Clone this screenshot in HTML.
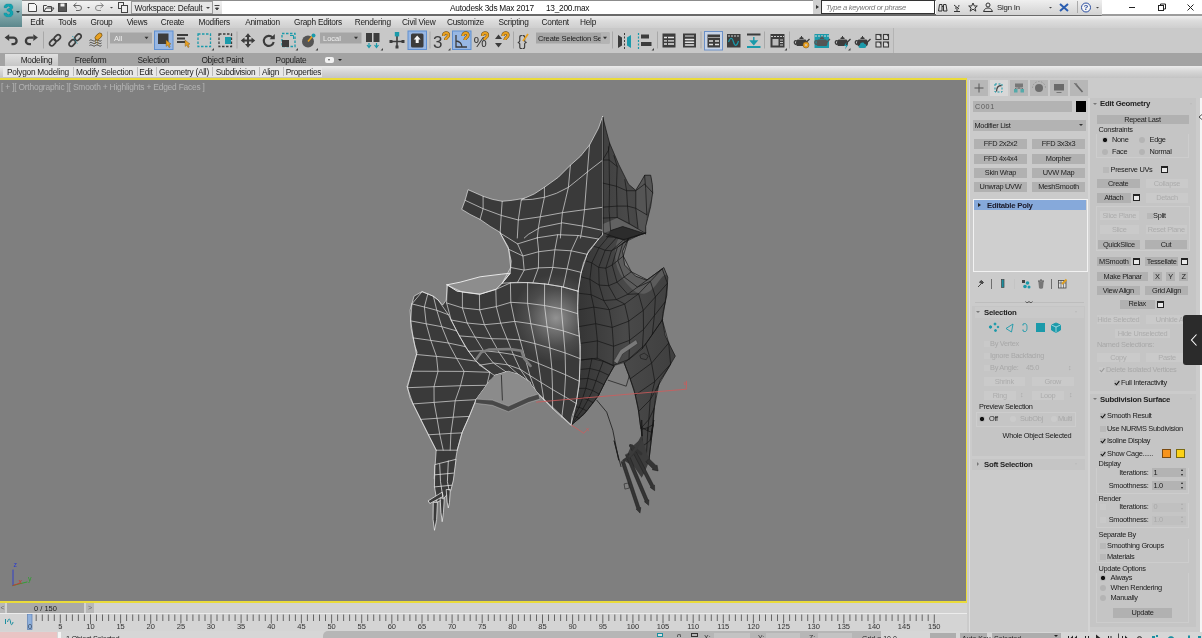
<!DOCTYPE html><html><head><meta charset="utf-8"><title>Autodesk 3ds Max 2017 13_200.max</title><style>
*{box-sizing:border-box;margin:0;padding:0}
html,body{width:1202px;height:638px;overflow:hidden;background:#cbcbcb}
body{position:relative;will-change:transform;font-family:"Liberation Sans",sans-serif;font-size:8.5px;color:#1a1a1a;line-height:1}
.a{position:absolute}
.t{position:absolute;white-space:nowrap;line-height:10px;height:10px}
.c{text-align:center}
.btn{position:absolute;background:#b1b1b1;text-align:center;white-space:nowrap;line-height:10px;height:10px;font-size:7.4px;letter-spacing:-0.3px;color:#222}
.btn.d{background:#cacaca;color:#acacac}
.dis{color:#a8a8a8}
.cb{position:absolute;width:6px;height:6px;background:#b9b9b9}
.rd{position:absolute;width:6px;height:6px;border-radius:50%;background:#b4b4b4}
.rd.on{background:radial-gradient(circle,#111 0 1.8px,#b4b4b4 2.4px)}
.p{font-size:7.4px;letter-spacing:-0.3px}
</style></head><body>
<div class="a" style="left:0;top:0;width:1202px;height:15px;background:#fff"></div>
<div class="a" style="left:0;top:0;width:222px;height:15px;background:linear-gradient(#f4f4f4,#dadada)"></div>
<div class="a" style="left:22px;top:0;width:1080px;height:1px;background:#808080;opacity:.9"></div>
<div class="a" style="left:0;top:14.200px;width:1202px;height:1.400px;background:linear-gradient(90deg,#6a6a6a 0,#6a6a6a 91.600%,#9c9c9c 91.700%)"></div>
<div class="a" style="left:0;top:0;width:22px;height:27px;background:linear-gradient(#b8cecf,#86acb0 45%,#5f8b90);border-radius:0"></div>
<div class="t" style="left:3.500px;top:0.500px;font-size:18px;line-height:20px;height:20px;font-weight:bold;color:#12a3b0;text-shadow:0 0 1px #0c7f8a">3</div>
<div class="a" style="left:16px;top:11px;border:2px solid transparent;border-top:2.5px solid #1c3c42"></div>
<svg class="a" style="left:24px;top:0" width="200" height="15" viewBox="0 0 200 15" fill="none" stroke="#444" stroke-width="1">
<path d="M4.5 3.5h6l2 2v6h-8z" fill="#f4f4f4"/>
<path d="M19.5 5.5h3l1 1h4v5h-8z" fill="#eee"/><path d="M20 11.5l2-3.5h8l-2.5 3.500"/>
<rect x="34.500" y="3.500" width="8" height="8" fill="#555"/><rect x="36.500" y="3.500" width="4" height="3" fill="#eee" stroke="none"/>
<path d="M50 5.500h5a2.500 2.500 0 010 5h-3M52.500 3l-3 2.500 3 2.500" stroke="#666"/>
<path d="M63 7l1.500 1.500 1.500-1.500z" fill="#444" stroke="none"/>
<path d="M79 5.500h-5a2.500 2.500 0 000 5h3M76.500 3l3 2.500-3 2.500" stroke="#888"/>
<path d="M86 7l1.500 1.500 1.500-1.500z" fill="#444" stroke="none"/>
<rect x="94.500" y="2.500" width="5" height="6" fill="#eee"/><rect x="97.500" y="5.500" width="6" height="7" fill="#eee"/>
<path d="M190.500 5.500h5M191.500 8l1.500 2 1.500-2z" fill="#333"/>
</svg>
<div class="a" style="left:131px;top:1px;width:82px;height:13px;background:#e6e6e6;border:1px solid #9a9a9a"></div>
<div class="t" style="left:134.5px;top:2.5px;font-size:8.3px;letter-spacing:-0.25px;color:#222">Workspace: Default</div>
<div class="a" style="left:206px;top:6.500px;border:2px solid transparent;border-top:2.5px solid #444"></div>
<div class="t" style="left:450px;top:2.500px;font-size:8.3px;letter-spacing:-0.25px;color:#111">Autodesk 3ds Max 2017</div>
<div class="t" style="left:546px;top:2.500px;font-size:8.3px;letter-spacing:-0.25px;color:#111">13_200.max</div>
<div class="a" style="left:936px;top:0;width:166px;height:14.500px;background:linear-gradient(#efefef,#d2d2d2)"></div>
<div class="a" style="left:813px;top:0;width:8px;height:14px;background:#d0d0d0"></div>
<div class="a" style="left:816px;top:4.500px;border:2.5px solid transparent;border-left:3px solid #333"></div>
<div class="a" style="left:821px;top:0;width:114px;height:14px;background:#fff;border:1px solid #333"></div>
<div class="t" style="left:826px;top:2.500px;font-size:7.6px;letter-spacing:-0.3px;font-style:italic;color:#777">Type a keyword or phrase</div>
<svg class="a" style="left:936px;top:0" width="170" height="15" viewBox="0 0 170 15" fill="none" stroke="#333" stroke-width="1">
<path d="M3.500 4.500h2.500v6.500h-3.500zM7.500 4.500h2.500l1 6.500h-3.500zM6 6.500h1.500" />
<path d="M18 5l5 4M19 8a3 3 0 004-3M21 9v2M18 11.500h6"/>
<path d="M37 3l1.300 3h3l-2.400 2 1 3.200-2.900-2-2.900 2 1-3.200-2.400-2h3z"/>
<circle cx="52" cy="5" r="2"/><path d="M47.500 11.500c1-3 3-3.500 4.500-3.500s3.500 .5 4.500 3.500z"/>
<path d="M113 7l1.500 1.500 1.500-1.500z" fill="#444" stroke="none"/>
<path d="M124 4l8 7M132 4l-8 7" stroke="#2a5db0" stroke-width="2"/>
<path d="M141.500 1v12" stroke="#aaa"/>
<circle cx="150" cy="7.500" r="4.500" stroke="#2a4da0" fill="#f4f4f4"/>
<path d="M160 7l1.500 1.500 1.500-1.500z" fill="#444" stroke="none"/>
</svg>
<div class="t" style="left:997px;top:2.500px;font-size:7.8px;letter-spacing:-0.2px;color:#222">Sign In</div>
<div class="t" style="left:1083.500px;top:2.500px;font-size:8px;font-weight:bold;color:#2a4da0">?</div>
<svg class="a" style="left:1110px;top:0" width="92" height="15" viewBox="0 0 92 15" fill="none" stroke="#222" stroke-width="1">
<path d="M19 7.500h6"/><rect x="48.500" y="5.500" width="5" height="5"/><path d="M50.500 5.500v-1.500h5v5h-2"/><path d="M77.500 4.500l6 6M83.500 4.500l-6 6"/></svg>
<div class="a" style="left:0;top:15.600px;width:1202px;height:12.400px;background:linear-gradient(#f0f0f0,#dcdcdc 40%,#cfcfcf)"></div>
<div class="t c" style="left:21px;width:32px;top:16.500px;font-size:8.3px;letter-spacing:-0.25px;color:#222">Edit</div>
<div class="t c" style="left:48.5px;width:37.5px;top:16.500px;font-size:8.3px;letter-spacing:-0.25px;color:#222">Tools</div>
<div class="t c" style="left:81px;width:41px;top:16.500px;font-size:8.3px;letter-spacing:-0.25px;color:#222">Group</div>
<div class="t c" style="left:117px;width:40px;top:16.500px;font-size:8.3px;letter-spacing:-0.25px;color:#222">Views</div>
<div class="t c" style="left:152px;width:41px;top:16.500px;font-size:8.3px;letter-spacing:-0.25px;color:#222">Create</div>
<div class="t c" style="left:188.5px;width:51.5px;top:16.500px;font-size:8.3px;letter-spacing:-0.25px;color:#222">Modifiers</div>
<div class="t c" style="left:235px;width:55px;top:16.500px;font-size:8.3px;letter-spacing:-0.25px;color:#222">Animation</div>
<div class="t c" style="left:285px;width:66px;top:16.500px;font-size:8.3px;letter-spacing:-0.25px;color:#222">Graph Editors</div>
<div class="t c" style="left:345.5px;width:54.5px;top:16.500px;font-size:8.3px;letter-spacing:-0.25px;color:#222">Rendering</div>
<div class="t c" style="left:392px;width:53.5px;top:16.500px;font-size:8.3px;letter-spacing:-0.25px;color:#222">Civil View</div>
<div class="t c" style="left:437.5px;width:56.0px;top:16.500px;font-size:8.3px;letter-spacing:-0.25px;color:#222">Customize</div>
<div class="t c" style="left:488.5px;width:50.0px;top:16.500px;font-size:8.3px;letter-spacing:-0.25px;color:#222">Scripting</div>
<div class="t c" style="left:531px;width:48.5px;top:16.500px;font-size:8.3px;letter-spacing:-0.25px;color:#222">Content</div>
<div class="t c" style="left:570px;width:36px;top:16.500px;font-size:8.3px;letter-spacing:-0.25px;color:#222">Help</div>
<div class="a" style="left:0;top:15px;width:22px;height:12px;background:linear-gradient(#7ea5a9,#5c878c);border-radius:0"></div>
<div class="t" style="left:3.500px;top:0.500px;font-size:18px;line-height:20px;height:20px;font-weight:bold;color:#12a3b0;text-shadow:0 0 1px #0c7f8a">3</div>
<div class="a" style="left:0;top:28px;width:1202px;height:25px;background:#cacaca"></div>
<div class="a" style="left:0;top:28px;width:894px;height:25px;background:#c8c8c8;border-right:1px solid #b4b4b4"></div>
<svg class="a" style="left:0;top:28px" width="894" height="25" viewBox="0 0 894 25" fill="none" font-family="Liberation Sans, sans-serif">
<path d="M9 9.600h4.300a3.300 3.300 0 010 6.600h-1.800" stroke="#3c3c3c" stroke-width="2.300"/><path d="M4.600 9.600l4.600-3.300v6.600z" fill="#3c3c3c"/>
<path d="M33.500 9.600h-4.300a3.300 3.300 0 000 6.600h1.800" stroke="#3c3c3c" stroke-width="2.300"/><path d="M37.900 9.600l-4.600-3.300v6.600z" fill="#3c3c3c"/>
<path d="M43.5 3.500v17" stroke="#a8a8a8" stroke-width="1"/>
<g stroke="#3c3c3c" stroke-width="1.700"><rect x="-3.600" y="-2.300" width="7.200" height="4.600" rx="2.300" transform="translate(52.700 14.500) rotate(-45)"/><rect x="-3.600" y="-2.300" width="7.200" height="4.600" rx="2.300" transform="translate(57.300 9.900) rotate(-45)"/></g>
<g stroke="#3c3c3c" stroke-width="1.700"><rect x="-3.600" y="-2.300" width="7.200" height="4.600" rx="2.300" transform="translate(72.200 15) rotate(-45)"/><rect x="-3.600" y="-2.300" width="7.200" height="4.600" rx="2.300" transform="translate(78 9.200) rotate(-45)"/></g><path d="M72.500 8l5 8" stroke="#1b9aaa" stroke-width="0.900" stroke-dasharray="1.500 1"/>
<path d="M89.500 12.500c2-2 4 2 6 0s4 2 6 0M89.500 15c2-2 4 2 6 0s4 2 6 0M89.500 17.500c2-2 4 2 6 0s4 2 6 0" stroke="#3c3c3c" stroke-width="0.900"/><ellipse cx="98.500" cy="8.500" rx="4.200" ry="2.400" transform="rotate(-45 98.500 8.500)" fill="#e8a020" stroke="#6a4a10" stroke-width="0.700"/><path d="M96 11c-1 2 0 3-1 5M97.500 12c0 2 1 3 0 5" stroke="#8a6a20" stroke-width="0.700"/>
<path d="M107.5 3.500v17" stroke="#a8a8a8" stroke-width="1"/>
<rect x="110" y="4.500" width="42" height="11" fill="#a6a6a6"/><text x="114" y="12.800" font-size="7.500" fill="#eee">All</text><path d="M144.500 9.500l2 2.500 2-2.500z" fill="#333" transform="translate(0 -0.700)"/>
<rect x="154.500" y="3" width="18.500" height="18.500" fill="#98b7e3" stroke="#5f8fd0" stroke-width="1"/>
<rect x="158" y="5.500" width="10.500" height="10.500" fill="#3c3c3c"/><path d="M166 12l5 4-2 .5 1.200 2.500-1.200 .6-1.200-2.500-1.600 1.300z" fill="#e8a020" stroke="#7a5010" stroke-width=".4"/>
<path d="M177 7h11M177 10.500h8M177 14h8" stroke="#3c3c3c" stroke-width="1.800"/><path d="M185 12l5 4-2 .5 1.200 2.500-1.200 .6-1.200-2.500-1.600 1.300z" fill="#e8a020" stroke="#7a5010" stroke-width=".4"/>
<rect x="198" y="6" width="12.500" height="12.500" stroke="#1b9aaa" stroke-width="1.300" stroke-dasharray="2.500 1.500"/>
<path d="M214 22.500h-2.500l2.500-2.500z" fill="#444"/>
<rect x="219" y="6" width="12.500" height="12.500" stroke="#3c3c3c" stroke-width="1.300" stroke-dasharray="2.500 1.500"/><rect x="225" y="9" width="6" height="7" fill="#1b9aaa"/>
<path d="M237 3.500v17" stroke="#a8a8a8" stroke-width="1"/>
<path d="M248 8v9M243.500 12.500h9" stroke="#3c3c3c" stroke-width="2"/><path d="M248 5.300l3 3.700h-6zM248 19.700l3-3.700h-6zM240.800 12.500l3.700-3v6zM255.200 12.500l-3.700-3v6z" fill="#3c3c3c"/>
<path d="M272.500 9.500a5 5 0 10 1.200 4.500" stroke="#3c3c3c" stroke-width="2.100"/><path d="M274.800 6v5.200h-5.200z" fill="#3c3c3c"/>
<rect x="282" y="5.500" width="13" height="13" stroke="#1b9aaa" stroke-width="1.300" stroke-dasharray="2.500 1.500"/><rect x="282" y="12" width="7" height="7" fill="#3c3c3c"/><path d="M290 7.500h3.500v3.500" stroke="#1b9aaa" stroke-width="1"/>
<path d="M298 22.500h-2.500l2.500-2.500z" fill="#444"/>
<circle cx="308" cy="13.500" r="6" fill="#555"/><path d="M308 13.500l5-6" stroke="#e8a020" stroke-width="1.500"/><circle cx="313.500" cy="7.500" r="2" fill="#1b9aaa"/>
<path d="M318 22.500h-2.500l2.500-2.500z" fill="#444"/>
<rect x="320" y="4.500" width="41.500" height="11" fill="#a6a6a6"/><text x="323" y="12.800" font-size="7.500" fill="#eee">Local</text><path d="M354 9.500l2 2.500 2-2.500z" fill="#333" transform="translate(0 -0.700)"/>
<rect x="366" y="5" width="6" height="9" fill="#3c3c3c"/><rect x="373.500" y="5" width="6" height="9" fill="#3c3c3c"/><path d="M369 15v4M376.500 15v4M367 17l2 2.500 2-2.500M374.500 17l2 2.500 2-2.500" stroke="#1b9aaa" stroke-width="1.200"/>
<path d="M383 22.500h-2.500l2.500-2.500z" fill="#444"/>
<path d="M397 7v12M390.500 13.500h13" stroke="#3c3c3c" stroke-width="1.600"/><rect x="394.800" y="4" width="4.400" height="4.400" fill="#1b9aaa"/><rect x="389.500" y="12" width="3" height="3" fill="#3c3c3c"/><rect x="401.500" y="12" width="3" height="3" fill="#3c3c3c"/><rect x="395.500" y="17.500" width="3" height="3" fill="#3c3c3c"/>
<rect x="408" y="3" width="18.500" height="18.500" fill="#98b7e3" stroke="#5f8fd0" stroke-width="1"/>
<rect x="411" y="5.500" width="12.500" height="14" rx="1.500" fill="#3c3c3c"/><path d="M417.200 7.500l3.500 4h-2v3.500h-3v-3.500h-2z" fill="#f4f4f4"/>
<path d="M430 3.500v17" stroke="#a8a8a8" stroke-width="1"/>
<text x="433" y="19.500" font-size="17" fill="#3c3c3c">3</text><path d="M443.500 8c0-4 5-4 5-1s-3 2-3 5" stroke="#6a4a10" stroke-width="3.200"/><path d="M443.500 8c0-4 5-4 5-1s-3 2-3 5" stroke="#e8a020" stroke-width="2.200"/>
<path d="M450.5 22.500h-2.500l2.500-2.500z" fill="#444"/>
<rect x="452.500" y="3" width="18.500" height="18.500" fill="#98b7e3" stroke="#5f8fd0" stroke-width="1"/>
<path d="M456 7v12h11M456 13a6 6 0 016 6" stroke="#3c3c3c" stroke-width="1.300"/><path d="M463 8c0-4 5-4 5-1s-3 2-3 5" stroke="#6a4a10" stroke-width="3.200"/><path d="M463 8c0-4 5-4 5-1s-3 2-3 5" stroke="#e8a020" stroke-width="2.200"/>
<text x="473.500" y="19" font-size="15" fill="#3c3c3c">%</text><path d="M482.500 8c0-4 5-4 5-1s-3 2-3 5" stroke="#6a4a10" stroke-width="3.200"/><path d="M482.500 8c0-4 5-4 5-1s-3 2-3 5" stroke="#e8a020" stroke-width="2.200"/>
<path d="M498.500 6.500l3.500 4.500h-7zM498.500 19.500l3.500-4.500h-7z" fill="#3c3c3c"/><path d="M503 8c0-4 5-4 5-1s-3 2-3 5" stroke="#6a4a10" stroke-width="3.200"/><path d="M503 8c0-4 5-4 5-1s-3 2-3 5" stroke="#e8a020" stroke-width="2.200"/>
<path d="M513.5 3.500v17" stroke="#a8a8a8" stroke-width="1"/>
<text x="517.500" y="18" font-size="14" fill="#3c3c3c">{}</text><path d="M523 13l5-7" stroke="#e8a020" stroke-width="1.800"/>
<rect x="536" y="4.500" width="73.500" height="11" fill="#a6a6a6"/><clipPath id="cs"><rect x="536" y="5" width="64.500" height="12"/></clipPath><text x="538" y="12.800" font-size="7.500" letter-spacing="-0.150" fill="#222" clip-path="url(#cs)">Create Selection Set</text><rect x="601" y="4.500" width="8.500" height="11" fill="#b4b4b4"/><path d="M603 9.500l2 2.500 2-2.500z" fill="#333" transform="translate(0 -0.700)"/>
<path d="M612.5 3.500v17" stroke="#a8a8a8" stroke-width="1"/>
<path d="M618 7l4 2.500v8l-4 2.500z" fill="#3c3c3c"/><path d="M631 7l-4 2.500v8l4 2.500z" fill="#1b9aaa"/><path d="M624.500 5v16" stroke="#3c3c3c" stroke-width="1" stroke-dasharray="2 1.500"/>
<path d="M638.500 5v16" stroke="#1b9aaa" stroke-width="1.200" stroke-dasharray="2 1.500"/><rect x="641" y="6.500" width="8" height="4" fill="#3c3c3c"/><rect x="641" y="14" width="10.500" height="4" fill="#3c3c3c"/>
<path d="M654 22.500h-2.500l2.500-2.500z" fill="#444"/>
<path d="M657.5 3.500v17" stroke="#a8a8a8" stroke-width="1"/>
<rect x="662.500" y="5.500" width="13" height="14" fill="#3c3c3c"/><path d="M664 9.500h10M664 12.800h10M664 16h10" stroke="#e4e4e4" stroke-width="1.300"/><path d="M667.500 8.500v9" stroke="#3c3c3c" stroke-width="1"/>
<rect x="683" y="5.500" width="13" height="14" fill="#3c3c3c"/><path d="M685 8h9" stroke="#e4e4e4" stroke-width="1"/><path d="M685.500 11.500h8M685.500 14.300h8M685.500 17h8" stroke="#e4e4e4" stroke-width="1.500" stroke-linecap="round"/>
<path d="M701 3.500v17" stroke="#a8a8a8" stroke-width="1"/>
<rect x="704.500" y="3.500" width="18" height="18.500" fill="#c8d4e6" stroke="#6a90c8" stroke-width="1"/>
<rect x="707.500" y="6.500" width="12.500" height="13" fill="#3c3c3c"/><path d="M709 13h4M715 13h4M709 16.500h4M715 16.500h4" stroke="#ddd" stroke-width="1.500"/><path d="M708 9.500h12" stroke="#ddd" stroke-width=".6"/>
<rect x="727" y="6" width="13.500" height="13.500" fill="#3c3c3c"/><path d="M728.500 14c2-5 3.500-5 5 0s3.500 4 5-1" stroke="#1b9aaa" stroke-width="1.200"/><path d="M728 8h12" stroke="#ccc" stroke-width="1" stroke-dasharray="2 1"/>
<path d="M747 6.500h13.500" stroke="#3c3c3c" stroke-width="2"/><path d="M747 19h13.500" stroke="#1b9aaa" stroke-width="2"/><path d="M753.800 9v5M750.800 13l3 3.500 3-3.500z" stroke="#1b9aaa" fill="#1b9aaa" stroke-width="1.400"/>
<path d="M764.5 3.500v17" stroke="#a8a8a8" stroke-width="1"/>
<rect x="770.500" y="6" width="14" height="13.500" fill="#3c3c3c"/><path d="M771 8.500h13" stroke="#ccc" stroke-width="1" stroke-dasharray="2 1"/><rect x="772.500" y="11" width="6" height="6.500" fill="#bbb"/><path d="M780 12h3M780 14.500h3M780 17h3" stroke="#ccc" stroke-width="1"/>
<path d="M787 22.500h-2.500l2.500-2.500z" fill="#444"/>
<path d="M789.5 3.500v17" stroke="#a8a8a8" stroke-width="1"/>
<path d="M797.5 11.500h8c2 2 2 4.500 .5 6.500h-9c-1.500-2-1.500-4.500 .5-6.500zM800 9.300h3l.8 1.800h-4.600zM801 8h1v1.200h-1z" fill="#3c3c3c"/><path d="M806 14.500l3.500-3.500M797 13c-3.500-1.500-3.500 3.500-.5 3.500" stroke="#3c3c3c" stroke-width="1.300" fill="none"/>
<circle cx="806" cy="17" r="3" fill="#e8a020" stroke="#8a5a10" stroke-width=".6"/><circle cx="806" cy="17" r="1" fill="#c8c8c8"/>
<rect x="814.500" y="6" width="14.500" height="14" fill="#1b9aaa"/><path d="M815 8h14" stroke="#ddd" stroke-width="1" stroke-dasharray="2 1"/>
<path d="M818.0 11.500h8c2 2 2 4.500 .5 6.500h-9c-1.500-2-1.500-4.500 .5-6.500zM820.5 9.300h3l.8 1.800h-4.600zM821.5 8h1v1.200h-1z" fill="#555"/><path d="M826.5 14.500l3.500-3.500M817.5 13c-3.500-1.500-3.500 3.500-.5 3.500" stroke="#555" stroke-width="1.300" fill="none"/>
<path d="M838.5 11.500h8c2 2 2 4.500 .5 6.500h-9c-1.500-2-1.500-4.500 .5-6.500zM841 9.300h3l.8 1.800h-4.600zM842 8h1v1.200h-1z" fill="#3c3c3c"/><path d="M847 14.500l3.500-3.500M838 13c-3.500-1.500-3.500 3.500-.5 3.500" stroke="#3c3c3c" stroke-width="1.300" fill="none"/>
<path d="M846.500 14l-2.500 4h2l-1 3.500 3-4.500h-2z" fill="#1b9aaa"/>
<path d="M850.5 22.500h-2.500l2.500-2.500z" fill="#444"/>
<path d="M858.5 11.500h8c2 2 2 4.500 .5 6.500h-9c-1.500-2-1.500-4.500 .5-6.500zM861 9.300h3l.8 1.800h-4.600zM862 8h1v1.200h-1z" fill="#3c3c3c"/><path d="M867 14.500l3.500-3.500M858 13c-3.500-1.500-3.500 3.500-.5 3.500" stroke="#3c3c3c" stroke-width="1.300" fill="none"/>
<path d="M860 20c-2 0-2-3 0-3c0-3 4-3 4.500-1c2.500-.5 2.500 4 0 4z" fill="#1b9aaa"/>
<g stroke="#3c3c3c" stroke-width="1.100" fill="#d8d8d8"><rect x="876" y="6.500" width="5" height="5"/><rect x="883.500" y="6.500" width="5" height="5"/><rect x="876" y="14" width="5" height="5"/><rect x="883.500" y="14" width="5" height="5"/></g><path d="M879 6.500h2v3M886.500 6.500h2v3M879 14h2v3M886.500 14h2v3" fill="#3c3c3c"/>
</svg>
<div class="a" style="left:0;top:53px;width:1202px;height:13px;background:#a3a3a3"></div>
<div class="a" style="left:5px;top:54px;width:53px;height:12px;background:linear-gradient(#e0e0e0,#c6c6c6)"></div>
<div class="t c" style="left:10.5px;width:52.0px;top:54.500px;font-size:8.3px;letter-spacing:-0.25px;color:#222">Modeling</div>
<div class="t c" style="left:66px;width:49px;top:54.500px;font-size:8.3px;letter-spacing:-0.25px;color:#222">Freeform</div>
<div class="t c" style="left:128px;width:51px;top:54.500px;font-size:8.3px;letter-spacing:-0.25px;color:#222">Selection</div>
<div class="t c" style="left:192px;width:61px;top:54.500px;font-size:8.3px;letter-spacing:-0.25px;color:#222">Object Paint</div>
<div class="t c" style="left:266px;width:50px;top:54.500px;font-size:8.3px;letter-spacing:-0.25px;color:#222">Populate</div>
<div class="a" style="left:325px;top:56.500px;width:9px;height:6px;background:#f2f2f2;border-radius:2px"></div>
<div class="a" style="left:328px;top:58.500px;border:1.5px solid transparent;border-top:2px solid #555"></div>
<div class="a" style="left:338px;top:58.500px;border:2px solid transparent;border-top:2.5px solid #222"></div>
<div class="a" style="left:0;top:66px;width:1202px;height:12px;background:linear-gradient(#ececec 0,#d6d6d6 45%,#c4c4c4 100%)"></div>
<div class="a" style="left:3px;top:66px;width:319px;height:11px;background:#e8e8e8"></div>
<div class="t c" style="left:-3px;width:82px;top:66.500px;font-size:8.3px;letter-spacing:-0.25px;color:#222">Polygon Modeling</div>
<div class="t c" style="left:66px;width:77px;top:66.500px;font-size:8.3px;letter-spacing:-0.25px;color:#222">Modify Selection</div>
<div class="t c" style="left:130px;width:32px;top:66.500px;font-size:8.3px;letter-spacing:-0.25px;color:#222">Edit</div>
<div class="t c" style="left:150px;width:68px;top:66.500px;font-size:8.3px;letter-spacing:-0.25px;color:#222">Geometry (All)</div>
<div class="t c" style="left:206px;width:59px;top:66.500px;font-size:8.3px;letter-spacing:-0.25px;color:#222">Subdivision</div>
<div class="t c" style="left:252px;width:37px;top:66.500px;font-size:8.3px;letter-spacing:-0.25px;color:#222">Align</div>
<div class="t c" style="left:277px;width:53px;top:66.500px;font-size:8.3px;letter-spacing:-0.25px;color:#222">Properties</div>
<div class="a" style="left:72.5px;top:67px;width:1px;height:9px;background:#bbb"></div>
<div class="a" style="left:136.5px;top:67px;width:1px;height:9px;background:#bbb"></div>
<div class="a" style="left:156px;top:67px;width:1px;height:9px;background:#bbb"></div>
<div class="a" style="left:212px;top:67px;width:1px;height:9px;background:#bbb"></div>
<div class="a" style="left:258.5px;top:67px;width:1px;height:9px;background:#bbb"></div>
<div class="a" style="left:283px;top:67px;width:1px;height:9px;background:#bbb"></div>
<div class="a" style="left:0;top:77.500px;width:967.500px;height:525px;background:#7f7f7f;border:2.500px solid #eadb3a;border-left:0"></div>
<div class="t" style="left:1px;top:81.500px;font-size:8.4px;color:#b4b4b4;letter-spacing:-0.2px">[ + ][ Orthographic ][ Smooth + Highlights + Edged Faces ]</div>
<svg class="a" style="left:0;top:80px" width="965" height="521" viewBox="0 80 965 521" fill="none" stroke-linejoin="round" stroke-linecap="round">
<defs>
<radialGradient id="hl" gradientUnits="userSpaceOnUse" cx="556" cy="318" r="44"><stop offset="0" stop-color="#929292"/><stop offset=".3" stop-color="#707070"/><stop offset=".65" stop-color="#4c4c4c"/><stop offset="1" stop-color="#3a3a3a"/></radialGradient>
<linearGradient id="lg1" gradientUnits="userSpaceOnUse" x1="470" y1="200" x2="600" y2="200"><stop offset="0" stop-color="#3e3e3e"/><stop offset="1" stop-color="#4e4e4e"/></linearGradient>
<linearGradient id="rg1" gradientUnits="userSpaceOnUse" x1="580" y1="0" x2="670" y2="0"><stop offset="0" stop-color="#363636"/><stop offset=".5" stop-color="#494949"/><stop offset="1" stop-color="#404040"/></linearGradient>
</defs>
<path d="M602.6 116.4L598.5 128.1L589.5 145.1L580.5 156.2L570.4 165.2L558.4 177.2L544.4 187.3L534.3 193.9L524.3 198.3L512.2 200.3L502.2 201.3L492.2 199.3L483.1 196.3L468.1 189.7L465.1 200.3L461.7 209.3L470.1 214.4L480.1 219.4L490.2 226.4L500.2 232.4L500.2 233.0L508.2 247.1L511.2 261.1L510.2 273.2L502.2 283.2L496.2 289.2L480.1 294.2L457.1 291.2L447.0 284.8L446.2 300.1L442.6 305.1L438.2 300.1L433.1 296.1L422.1 291.7L414.1 296.1L410.1 310.1L411.1 328.2L415.1 346.3L417.1 352.3L412.1 370.3L407.1 386.4L407.1 386.0L410.1 398.1L418.1 414.1L427.1 432.2L436.2 450.2L435.2 464.3L434.2 478.3L452.2 480.3L454.2 468.3L457.2 450.2L462.2 432.2L470.3 414.1L476.3 399.1L490.3 380.0L494.4 375.4L508.4 371.3L518.4 374.4L530.5 382.4L530.5 384.0L538.5 394.0L571.6 425.2L571.0 425.3L572.0 416.2L576.0 404.2L579.0 386.2L579.6 374.1L580.1 360.1L580.5 345.4L578.5 329.4L577.9 317.3L577.5 305.3L578.1 291.2L580.5 275.2L583.5 263.1L588.5 251.1L598.5 239.0L602.5 235.0L602.5 116.4Z" fill="#3a3a3a"/>
<clipPath id="cl"><path d="M602.6 116.4L598.5 128.1L589.5 145.1L580.5 156.2L570.4 165.2L558.4 177.2L544.4 187.3L534.3 193.9L524.3 198.3L512.2 200.3L502.2 201.3L492.2 199.3L483.1 196.3L468.1 189.7L465.1 200.3L461.7 209.3L470.1 214.4L480.1 219.4L490.2 226.4L500.2 232.4L500.2 233.0L508.2 247.1L511.2 261.1L510.2 273.2L502.2 283.2L496.2 289.2L480.1 294.2L457.1 291.2L447.0 284.8L446.2 300.1L442.6 305.1L438.2 300.1L433.1 296.1L422.1 291.7L414.1 296.1L410.1 310.1L411.1 328.2L415.1 346.3L417.1 352.3L412.1 370.3L407.1 386.4L407.1 386.0L410.1 398.1L418.1 414.1L427.1 432.2L436.2 450.2L435.2 464.3L434.2 478.3L452.2 480.3L454.2 468.3L457.2 450.2L462.2 432.2L470.3 414.1L476.3 399.1L490.3 380.0L494.4 375.4L508.4 371.3L518.4 374.4L530.5 382.4L530.5 384.0L538.5 394.0L571.6 425.2L571.0 425.3L572.0 416.2L576.0 404.2L579.0 386.2L579.6 374.1L580.1 360.1L580.5 345.4L578.5 329.4L577.9 317.3L577.5 305.3L578.1 291.2L580.5 275.2L583.5 263.1L588.5 251.1L598.5 239.0L602.5 235.0L602.5 116.4Z"/></clipPath>
<g clip-path="url(#cl)"><circle cx="556" cy="318" r="44" fill="url(#hl)"/></g>
<path d="M447.0 284.8L460.1 282.2L480.1 276.8L501.2 274.2L510.2 273.2L502.2 283.2L496.2 289.2L480.1 294.2L457.1 291.2L447.0 284.8Z" fill="#8d8d8d" stroke="#f0f0f0" stroke-width="0.9"/>
<path d="M602.6 116.4L606.6 132.1L609.6 143.1L618.6 164.2L628.6 184.3L635.7 190.3L640.7 182.2L644.7 175.2L650.7 175.2L652.3 184.3L652.7 192.3L650.7 206.3L647.7 218.4L645.7 226.4L645.7 233.0L628.6 238.0L622.6 251.1L624.6 265.1L635.7 276.2L646.7 280.2L657.7 272.2L663.8 267.5L667.8 277.2L666.8 295.2L662.8 313.3L662.3 320.0L665.3 336.0L675.3 356.1L668.3 368.1L660.3 380.2L656.2 392.2L654.2 408.2L653.2 424.3L650.2 440.3L653.8 420.0L651.2 440.7L648.6 463.1L643.4 463.1L641.7 440.7L641.7 420.0L642.2 436.3L640.2 424.3L638.2 408.2L634.2 390.2L629.2 376.1L624.2 363.1L614.1 366.1L606.1 380.2L598.1 396.2L584.1 414.2L571.0 425.3L571.0 425.3L572.0 416.2L576.0 404.2L579.0 386.2L579.6 374.1L580.1 360.1L580.5 345.4L578.5 329.4L577.9 317.3L577.5 305.3L578.1 291.2L580.5 275.2L583.5 263.1L588.5 251.1L598.5 239.0L602.5 235.0Z" fill="url(#rg1)"/>
<clipPath id="cr"><path d="M602.6 116.4L606.6 132.1L609.6 143.1L618.6 164.2L628.6 184.3L635.7 190.3L640.7 182.2L644.7 175.2L650.7 175.2L652.3 184.3L652.7 192.3L650.7 206.3L647.7 218.4L645.7 226.4L645.7 233.0L628.6 238.0L622.6 251.1L624.6 265.1L635.7 276.2L646.7 280.2L657.7 272.2L663.8 267.5L667.8 277.2L666.8 295.2L662.8 313.3L662.3 320.0L665.3 336.0L675.3 356.1L668.3 368.1L660.3 380.2L656.2 392.2L654.2 408.2L653.2 424.3L650.2 440.3L653.8 420.0L651.2 440.7L648.6 463.1L643.4 463.1L641.7 440.7L641.7 420.0L642.2 436.3L640.2 424.3L638.2 408.2L634.2 390.2L629.2 376.1L624.2 363.1L614.1 366.1L606.1 380.2L598.1 396.2L584.1 414.2L571.0 425.3L571.0 425.3L572.0 416.2L576.0 404.2L579.0 386.2L579.6 374.1L580.1 360.1L580.5 345.4L578.5 329.4L577.9 317.3L577.5 305.3L578.1 291.2L580.5 275.2L583.5 263.1L588.5 251.1L598.5 239.0L602.5 235.0Z"/></clipPath>
<g clip-path="url(#cr)"><path d="M645.7 234.2L642.1 235.2L638.6 236.2L635.0 237.2L631.5 238.2L628.2 239.5L625.6 241.5L624.0 244.4L623.1 247.9L622.6 251.5L622.6 255.1L622.9 258.8L623.6 262.4L624.6 265.9L626.1 269.2L627.9 272.4L629.9 275.6L632.1 278.5L634.6 281.2L637.3 283.7L640.0 285.7L642.7 286.3L645.4 285.1L647.9 282.7L650.4 279.9L652.6 277.0L654.8 274.0L657.2 271.3L660.1 269.2L663.2 267.5" stroke="#5c5c5c" stroke-width="15" fill="none"/>
<path d="M602.9 224.1L617.2 217.9L645.7 233.5L622.7 226.5L610.6 230.6L602.9 233.5Z" fill="#626262"/>
<path d="M610.6 230.6L622.7 226.5L645.7 233.9L624.8 240.3L613.9 237.2L606.2 236.8Z" fill="#2c2c2c"/>
<path d="M635.8 190.7L644.6 175.4L651.2 175.8L652.9 192.9L646.8 214.8L645.7 233.5L638.0 228.0L635.8 208.3Z" fill="#555"/>
</g>
<path d="M608.4 146.8L609.1 160.0L609.5 188.5L609.1 210.5L610.6 230.2M613.9 155.6L617.2 166.6L616.5 186.3L617.2 217.5M624.8 179.7L626.6 190.7L627.5 206.1L629.2 223.6M635.8 190.7L635.8 208.3L638.0 228.0M602.5 183.0L616.5 186.3L626.6 190.7L635.8 190.7L644.6 184.1M602.5 207.2L617.2 206.1L627.5 206.1L635.8 208.3L646.8 214.8M602.5 218.1L617.2 217.5L629.2 223.6L645.7 233.5M602.5 160.0L609.1 160.0L617.2 166.6M644.6 175.4L645.7 188.5L646.8 214.8M644.6 184.1L652.9 192.9M610.6 230.6L622.7 226.5L645.7 233.9M606.2 236.8L613.9 237.2L624.8 240.3M602.6 160.2L608.6 150.1L609.6 143.1M602.6 116.4L606.6 132.1L609.6 143.1L618.6 164.2L628.6 184.3L635.7 190.3L640.7 182.2L644.7 175.2L650.7 175.2L652.3 184.3L652.7 192.3L650.7 206.3L647.7 218.4L645.7 226.4L645.7 233.0L628.6 238.0L622.6 251.1L624.6 265.1L635.7 276.2L646.7 280.2L657.7 272.2L663.8 267.5L667.8 277.2L666.8 295.2L662.8 313.3L662.3 320.0L665.3 336.0L675.3 356.1L668.3 368.1L660.3 380.2L656.2 392.2L654.2 408.2L653.2 424.3L650.2 440.3L653.8 420.0L651.2 440.7L648.6 463.1M624.2 363.1L629.2 376.1L634.2 390.2L638.2 408.2L640.2 424.3L642.2 436.3L641.7 420.0L641.7 440.7L643.4 463.1M614.1 366.1L606.1 380.2L598.1 396.2L584.1 414.2L571.0 425.3M602.5 232.4L609.5 235.2L616.6 237.6L623.9 239.5L631.1 237.7L638.4 235.4L645.7 233.0M592.9 246.1L599.0 247.8L605.1 250.3L611.4 250.8L617.3 247.4L622.8 243.1L628.3 238.8M584.6 260.5L591.8 262.9L598.7 267.4L605.8 268.2L612.2 265.0L617.8 260.5L623.3 256.1M580.3 276.6L589.9 279.3L599.2 285.1L608.6 285.7L617.0 282.2L624.1 277.0L631.3 271.8M578.0 293.2L591.1 294.7L603.7 300.5L616.4 299.6L627.8 294.3L637.5 287.1L647.2 279.8M577.6 310.0L593.8 307.1L609.2 309.7L624.7 304.0L638.6 293.8L650.4 281.3L662.2 268.8M578.3 326.7L595.7 323.7L612.2 327.4L628.7 321.2L643.3 310.4L655.4 296.9L667.4 283.3M580.2 343.4L597.4 340.9L613.5 346.3L629.6 340.3L643.5 329.5L654.4 315.6L665.3 301.7M580.1 360.1L597.2 358.2L613.1 365.3L629.0 359.4L642.4 348.6L652.3 334.3L662.3 320.0M602.5 232.4L592.9 246.1L584.6 260.5L580.3 276.6L578.0 293.2L577.6 310.0L578.3 326.7L580.2 343.4L580.1 360.1M609.5 235.2L599.0 247.8L591.8 262.9L589.9 279.3L591.1 294.7L593.8 307.1L595.7 323.7L597.4 340.9L597.2 358.2M616.6 237.6L605.1 250.3L598.7 267.4L599.2 285.1L603.7 300.5L609.2 309.7L612.2 327.4L613.5 346.3L613.1 365.3M623.9 239.5L611.4 250.8L605.8 268.2L608.6 285.7L616.4 299.6L624.7 304.0L628.7 321.2L629.6 340.3L629.0 359.4M631.1 237.7L617.3 247.4L612.2 265.0L617.0 282.2L627.8 294.3L638.6 293.8L643.3 310.4L643.5 329.5L642.4 348.6M638.4 235.4L622.8 243.1L617.8 260.5L624.1 277.0L637.5 287.1L650.4 281.3L655.4 296.9L654.4 315.6L652.3 334.3M645.7 233.0L628.3 238.8L623.3 256.1L631.3 271.8L647.2 279.8L662.2 268.8L667.4 283.3L665.3 301.7L662.3 320.0M624.2 363.1L645.7 344.1L662.3 320.0M630.2 378.9L651.6 363.1L668.7 343.0M635.3 395.0L654.8 381.5L670.6 364.2M638.6 411.5L650.2 399.8L658.7 384.9M640.9 428.3L648.8 419.6L654.2 408.4M641.9 427.5L647.8 430.9L651.7 432.3M641.7 429.4L648.0 427.6L653.0 424.6M642.2 446.3L647.1 443.0L651.4 439.2M643.4 463.1L646.0 463.1L648.6 463.1M624.2 363.1L630.2 378.9L635.3 395.0L638.6 411.5L640.9 428.3L641.9 427.5L641.7 429.4L642.2 446.3L643.4 463.1M645.7 344.1L651.6 363.1L654.8 381.5L650.2 399.8L648.8 419.6L647.8 430.9L648.0 427.6L647.1 443.0L646.0 463.1M662.3 320.0L668.7 343.0L670.6 364.2L658.7 384.9L654.2 408.4L651.7 432.3L653.0 424.6L651.4 439.2L648.6 463.1M580.1 360.1L591.9 358.6L603.2 361.3L614.1 366.1M579.8 369.5L589.9 368.5L599.5 370.9L608.9 375.3M579.4 379.0L587.9 378.4L596.0 380.7L603.9 384.6M578.7 388.4L585.8 388.3L592.6 390.5L599.2 394.1M577.1 397.7L582.7 397.9L587.9 399.8L593.1 402.7M575.1 406.9L579.1 407.3L582.9 408.8L586.6 411.0M572.1 415.9L574.5 416.2L576.8 417.2L579.1 418.4M571.0 425.3L571.0 425.3L571.0 425.3L571.0 425.3M580.1 360.1L579.8 369.5L579.4 379.0L578.7 388.4L577.1 397.7L575.1 406.9L572.1 415.9L571.0 425.3M591.9 358.6L589.9 368.5L587.9 378.4L585.8 388.3L582.7 397.9L579.1 407.3L574.5 416.2L571.0 425.3M603.2 361.3L599.5 370.9L596.0 380.7L592.6 390.5L587.9 399.8L582.9 408.8L576.8 417.2L571.0 425.3M614.1 366.1L608.9 375.3L603.9 384.6L599.2 394.1L593.1 402.7L586.6 411.0L579.1 418.4L571.0 425.3" stroke="#161616" stroke-width="0.7"/>
<path d="M602.6 160.2L589.5 170.2L578.5 179.2L568.4 187.3L556.4 193.3L544.4 197.3L532.3 199.3L521.3 199.9M602.6 207.3L584.5 209.7L562.4 212.7L540.3 216.8L518.3 220.0L501.2 215.4L483.1 208.7L465.1 200.3M602.6 230.4L584.5 226.4L562.4 222.8L540.3 227.4L528.3 234.4L524.3 238.0M589.5 145.1L587.5 170.2L584.5 209.7L582.5 226.4L580.5 238.0M570.4 165.2L568.4 187.3L565.4 200.3L562.4 212.7L561.4 222.8L560.4 238.0M544.4 187.3L544.4 197.3L540.3 216.8L538.3 228.4L537.3 238.0M524.3 198.3L521.3 199.9L518.3 220.0L517.3 238.0M502.2 201.3L501.2 215.4L500.2 232.4M483.1 196.3L483.1 208.7L480.1 219.4M602.6 116.4L598.5 128.1L589.5 145.1L580.5 156.2L570.4 165.2L558.4 177.2L544.4 187.3L534.3 193.9L524.3 198.3L512.2 200.3L502.2 201.3L492.2 199.3L483.1 196.3L468.1 189.7L465.1 200.3L461.7 209.3L470.1 214.4L480.1 219.4L490.2 226.4L500.2 232.4L500.2 233.0L508.2 247.1L511.2 261.1L510.2 273.2L502.2 283.2M447.2 285.1L446.2 300.1L442.6 305.1L438.2 300.1L433.1 296.1L422.1 291.7L414.1 296.1L410.1 310.1L411.1 328.2L415.1 346.3L417.1 352.3L412.1 370.3L407.1 386.4L407.1 386.0L410.1 398.1L418.1 414.1L427.1 432.2L436.2 450.2L435.2 464.3L434.2 478.3M490.3 380.0L476.3 399.1L470.3 414.1L462.2 432.2L457.2 450.2L454.2 468.3L452.2 480.3M494.4 375.4L508.4 371.3L518.4 374.4L530.5 382.4L530.5 384.0L538.5 394.0L571.6 425.2M602.5 116.4L602.5 235.0L598.5 239.0L588.5 251.1L583.5 263.1L580.5 275.2L578.1 291.2L577.5 305.3L577.9 317.3L578.5 329.4L580.5 345.4L580.1 360.1L579.6 374.1L579.0 386.2L576.0 404.2L572.0 416.2L571.0 425.3M500.2 233.0L517.6 243.9L537.3 237.8L557.7 234.7L578.2 235.5L598.5 239.0M508.7 249.3L522.9 256.0L538.7 251.7L554.9 249.8L571.2 250.8L587.2 254.3M510.7 267.5L524.2 270.1L538.4 267.9L552.8 267.4L567.1 268.9L581.2 272.4M502.2 283.2L517.6 282.3L532.9 282.8L548.2 284.4L563.3 287.0L578.1 291.2M500.2 233.0L508.7 249.3L510.7 267.5L502.2 283.2M517.6 243.9L522.9 256.0L524.2 270.1L517.6 282.3M537.3 237.8L538.7 251.7L538.4 267.9L532.9 282.8M557.7 234.7L554.9 249.8L552.8 267.4L548.2 284.4M578.2 235.5L571.2 250.8L567.1 268.9L563.3 287.0M598.5 239.0L587.2 254.3L581.2 272.4L578.1 291.2M447.2 285.1L462.4 292.1L479.4 294.3L495.8 289.5L510.4 282.9L527.6 282.6L544.6 283.9L561.6 286.6L578.1 291.2M446.6 302.9L462.4 307.9L479.7 309.8L496.3 306.6L510.8 302.3L527.6 303.3L544.5 305.5L561.3 308.8L577.7 313.7M451.1 320.0L467.2 323.0L484.4 324.7L500.7 323.2L514.7 321.4L530.8 323.7L547.1 326.9L563.3 330.9L579.3 336.2M459.4 335.9L475.1 337.1L491.6 338.7L507.1 339.0L520.1 339.9L534.9 343.6L549.9 348.0L565.1 352.9L580.1 358.6M468.5 351.3L483.5 350.7L499.1 352.3L513.4 354.6L525.1 358.1L538.4 363.4L551.9 369.0L565.6 374.8L579.3 381.2M479.6 365.2L493.4 363.0L507.5 364.8L520.1 369.2L529.9 375.5L541.1 382.5L552.5 389.5L564.4 396.4L576.2 403.4M494.4 375.4L506.2 372.0L518.1 374.3L528.4 381.2L535.5 390.8L543.9 399.9L552.6 408.7L561.8 417.0L571.0 425.3M447.2 285.1L446.6 302.9L451.1 320.0L459.4 335.9L468.5 351.3L479.6 365.2L494.4 375.4M462.4 292.1L462.4 307.9L467.2 323.0L475.1 337.1L483.5 350.7L493.4 363.0L506.2 372.0M479.4 294.3L479.7 309.8L484.4 324.7L491.6 338.7L499.1 352.3L507.5 364.8L518.1 374.3M495.8 289.5L496.3 306.6L500.7 323.2L507.1 339.0L513.4 354.6L520.1 369.2L528.4 381.2M510.4 282.9L510.8 302.3L514.7 321.4L520.1 339.9L525.1 358.1L529.9 375.5L535.5 390.8M527.6 282.6L527.6 303.3L530.8 323.7L534.9 343.6L538.4 363.4L541.1 382.5L543.9 399.9M544.6 283.9L544.5 305.5L547.1 326.9L549.9 348.0L551.9 369.0L552.5 389.5L552.6 408.7M561.6 286.6L561.3 308.8L563.3 330.9L565.1 352.9L565.6 374.8L564.4 396.4L561.8 417.0M578.1 291.2L577.7 313.7L579.3 336.2L580.1 358.6L579.3 381.2L576.2 403.4L571.0 425.3M422.1 291.7L427.8 293.9L433.4 296.3L438.2 300.1M411.9 303.9L424.4 307.0L436.8 310.3L448.5 314.8M410.7 320.9L426.2 323.8L441.8 326.7L456.6 330.9M413.2 337.9L430.8 340.4L448.4 343.0L465.3 346.6M416.5 354.5L436.5 356.4L456.5 358.3L475.9 361.2M411.8 371.2L438.0 371.3L464.1 371.4L489.9 372.3M407.4 387.7L434.0 386.7L460.5 385.7L486.8 385.3M413.0 403.9L434.1 402.4L455.2 400.8L476.0 399.7M420.7 419.4L437.0 418.3L453.2 417.2L469.2 416.4M428.4 434.8L439.7 434.1L450.9 433.4L462.0 432.9M436.2 450.2L443.2 450.2L450.2 450.2L457.2 450.2M422.1 291.7L411.9 303.9L410.7 320.9L413.2 337.9L416.5 354.5L411.8 371.2L407.4 387.7L413.0 403.9L420.7 419.4L428.4 434.8L436.2 450.2M427.8 293.9L424.4 307.0L426.2 323.8L430.8 340.4L436.5 356.4L438.0 371.3L434.0 386.7L434.1 402.4L437.0 418.3L439.7 434.1L443.2 450.2M433.4 296.3L436.8 310.3L441.8 326.7L448.4 343.0L456.5 358.3L464.1 371.4L460.5 385.7L455.2 400.8L453.2 417.2L450.9 433.4L450.2 450.2M438.2 300.1L448.5 314.8L456.6 330.9L465.3 346.6L475.9 361.2L489.9 372.3L486.8 385.3L476.0 399.7L469.2 416.4L462.0 432.9L457.2 450.2" stroke="#e8e8e8" stroke-width="0.66"/>
<path d="M603 117.500V232" stroke="#111" stroke-width="0.9"/>
<path d="M494.4 375.4L508.4 371.3L518.4 374.4L530.5 382.4L530.5 384.0L538.5 394.0L528.5 397.1L508.4 406.1L492.3 400.1L476.3 399.1L490.3 380.0Z" fill="#8b8b8b"/><path d="M501.4 375.4L502.4 400.1" stroke="#222" stroke-width="0.8"/><path d="M476.3 399.1L492.3 400.1L508.4 406.1L528.5 397.1L538.5 394.0L540.1 399.1L528.5 402.5L508.4 411.7L492.3 405.3L475.5 403.3Z" fill="#484848" stroke="#d0d0d0" stroke-width="0.4"/><path d="M476.3 359.3L481.3 352.3L489.3 349.5L510.4 349.1L521.4 350.7L524.1 358.3L530.5 365.9" stroke="#7d7d7d" stroke-width="2.600" fill="none" clip-path="url(#cl)"/><path d="M498.4 320.2L514.4 316.2L534.5 315.2L538.5 328.2L518.4 330.2L502.4 328.2Z" fill="#9a9a9a" opacity="0.0"/><path d="M435.3 464.5L456.0 459.3L453.4 480.0L450.9 490.3L443.1 499.0L437.1 502.4L434.5 486.9Z" fill="#3a3a3a" stroke="#f2f2f2" stroke-width="0.7"/><path d="M428.4 500.7L442.2 492.1L443.1 496.4L430.2 503.3Z" fill="#3a3a3a" stroke="#f2f2f2" stroke-width="0.7"/><path d="M433.6 502.4L437.4 502.4L436.6 519.7L434.5 530.3L433.1 519.7Z" fill="#3a3a3a" stroke="#f2f2f2" stroke-width="0.7"/><path d="M440.5 498.1L444.3 498.1L443.4 512.8L442.2 521.7L441.0 512.8Z" fill="#3a3a3a" stroke="#f2f2f2" stroke-width="0.7"/><path d="M446.6 489.5L450.3 489.5L449.5 502.4L448.3 507.9L447.2 502.4Z" fill="#3a3a3a" stroke="#f2f2f2" stroke-width="0.7"/><path d="M439.7 464.5L440.5 481.7L443.1 499.0M448.3 461.0L447.4 481.7L449.1 490.3M435.3 474.8L453.4 473.1M434.5 486.9L451.7 485.2" stroke="#f2f2f2" stroke-width="0.7"/><path d="M630.0 448.4L641.7 438.1L649.5 460.5L644.8 471.7L641.7 477.8L634.0 466.6L624.5 461.0Z" fill="#3c3c3c"/><path d="M621.2 461.9L636.9 508.9L636.1 509.1L640.0 513.1L640.8 507.6L640.0 507.8L624.3 460.9Z" fill="#343434" stroke="#1c1c1c" stroke-width="0.5"/><path d="M625.5 455.1L645.2 501.4L644.4 501.7L648.6 505.3L648.9 499.8L648.2 500.1L628.6 453.8Z" fill="#343434" stroke="#1c1c1c" stroke-width="0.5"/><path d="M629.9 446.6L650.9 487.0L650.2 487.4L654.7 490.7L654.5 485.1L653.8 485.5L632.8 445.1Z" fill="#343434" stroke="#1c1c1c" stroke-width="0.5"/><path d="M646.2 462.1L653.0 468.9L652.2 469.7L658.1 470.9L657.0 464.9L656.2 465.7L649.3 458.9Z" fill="#343434" stroke="#1c1c1c" stroke-width="0.5"/><path d="M630.5 445.5L640.9 453.6" stroke="#333" stroke-width="3"/><path d="M623.6 460.5L634.8 452.8" stroke="#333" stroke-width="2.500"/><path d="M641.7 437.2L636.6 447.6L629.7 456.2" stroke="#3a3a3a" stroke-width="2.500"/><path d="M624.5 483.8L628.8 482.9L629.3 488.1L625.3 489.0Z" stroke="#222" stroke-width="0.6"/><path d="M596.7 400.1L606.7 412.1L612.8 430.2L618.8 460.3L614.1 440.7L621.0 466.6" stroke="#1a1a1a" stroke-width="0.8"/><path d="M608.1 380.2L626.2 386.2L629.2 376.1" stroke="#1a1a1a" stroke-width="0.7"/><path d="M613.7 361.1L620.2 350.1L636.2 339.6L637.8 343.7L622.6 354.1L617.5 363.7Z" fill="#7a7a7a" stroke="#2a2a2a" stroke-width="0.5"/><path d="M640.2 355.1L644.2 353.1L648.2 356.1L646.2 359.7L641.2 358.5Z" stroke="#1a1a1a" stroke-width="0.6"/><path d="M536.5 402.1L686.3 389.2L686.3 381.2" stroke="#d25a5a" stroke-width="0.8"/><path d="M571.6 425.2L583.7 433.2L585.7 431.2" stroke="#d25a5a" stroke-width="0.8"/><g font-family="Liberation Sans, sans-serif" font-size="6" fill="#d25a5a" stroke="none"><text x="683.500" y="384.500">u</text><text x="586" y="431">x</text></g><path d="M13 570v15.500" stroke="#2a3ad0" stroke-width="0.9"/><path d="M13 585.500l14-3.500" stroke="#2aa02a" stroke-width="0.9"/><path d="M13 585.500l6-2" stroke="#d03030" stroke-width="0.9"/><g font-family="Liberation Sans, sans-serif" font-size="7" stroke="none"><text x="13.500" y="567" fill="#2a3ad0">z</text><text x="18.500" y="584" fill="#d03030">x</text><text x="28" y="580.500" fill="#2aa02a">y</text></g>
</svg>
<div class="a" style="left:0;top:603px;width:967px;height:10px;background:#d2d2d2"></div>
<div class="a" style="left:7px;top:603px;width:77px;height:10px;background:#a9a9a9"></div>
<div class="t c" style="left:7px;width:77px;top:603.500px;font-size:7.5px;color:#222">0 / 150</div>
<div class="a" style="left:0;top:603px;width:5px;height:10px;background:#b8b8b8"></div>
<div class="a" style="left:86px;top:603px;width:8px;height:10px;background:#b8b8b8"></div>
<div class="t" style="left:0.500px;top:603px;font-size:7px;color:#666">&lt;</div><div class="t" style="left:88px;top:603px;font-size:7px;color:#666">&gt;</div>
<div class="a" style="left:0;top:613px;width:967px;height:1px;background:#ececec;z-index:2"></div>
<div class="a" style="left:0;top:613px;width:967px;height:18px;background:#d4d4d4"></div>
<svg class="a" style="left:0;top:613px" width="967" height="18" viewBox="0 0 967 18"><g stroke="#4a4a4a" stroke-width="0.8"><path d="M30.2 1.500V16"/><path d="M36.2 1.500V8"/><path d="M42.3 1.500V8"/><path d="M48.3 1.500V8"/><path d="M54.3 1.500V8"/><path d="M60.3 1.500V16"/><path d="M66.4 1.500V8"/><path d="M72.4 1.500V8"/><path d="M78.4 1.500V8"/><path d="M84.4 1.500V8"/><path d="M90.5 1.500V16"/><path d="M96.5 1.500V8"/><path d="M102.5 1.500V8"/><path d="M108.6 1.500V8"/><path d="M114.6 1.500V8"/><path d="M120.6 1.500V16"/><path d="M126.6 1.500V8"/><path d="M132.7 1.500V8"/><path d="M138.7 1.500V8"/><path d="M144.7 1.500V8"/><path d="M150.7 1.500V16"/><path d="M156.8 1.500V8"/><path d="M162.8 1.500V8"/><path d="M168.8 1.500V8"/><path d="M174.8 1.500V8"/><path d="M180.9 1.500V16"/><path d="M186.9 1.500V8"/><path d="M192.9 1.500V8"/><path d="M199.0 1.500V8"/><path d="M205.0 1.500V8"/><path d="M211.0 1.500V16"/><path d="M217.0 1.500V8"/><path d="M223.1 1.500V8"/><path d="M229.1 1.500V8"/><path d="M235.1 1.500V8"/><path d="M241.1 1.500V16"/><path d="M247.2 1.500V8"/><path d="M253.2 1.500V8"/><path d="M259.2 1.500V8"/><path d="M265.3 1.500V8"/><path d="M271.3 1.500V16"/><path d="M277.3 1.500V8"/><path d="M283.3 1.500V8"/><path d="M289.4 1.500V8"/><path d="M295.4 1.500V8"/><path d="M301.4 1.500V16"/><path d="M307.4 1.500V8"/><path d="M313.5 1.500V8"/><path d="M319.5 1.500V8"/><path d="M325.5 1.500V8"/><path d="M331.6 1.500V16"/><path d="M337.6 1.500V8"/><path d="M343.6 1.500V8"/><path d="M349.6 1.500V8"/><path d="M355.7 1.500V8"/><path d="M361.7 1.500V16"/><path d="M367.7 1.500V8"/><path d="M373.7 1.500V8"/><path d="M379.8 1.500V8"/><path d="M385.8 1.500V8"/><path d="M391.8 1.500V16"/><path d="M397.8 1.500V8"/><path d="M403.9 1.500V8"/><path d="M409.9 1.500V8"/><path d="M415.9 1.500V8"/><path d="M422.0 1.500V16"/><path d="M428.0 1.500V8"/><path d="M434.0 1.500V8"/><path d="M440.0 1.500V8"/><path d="M446.1 1.500V8"/><path d="M452.1 1.500V16"/><path d="M458.1 1.500V8"/><path d="M464.1 1.500V8"/><path d="M470.2 1.500V8"/><path d="M476.2 1.500V8"/><path d="M482.2 1.500V16"/><path d="M488.3 1.500V8"/><path d="M494.3 1.500V8"/><path d="M500.3 1.500V8"/><path d="M506.3 1.500V8"/><path d="M512.4 1.500V16"/><path d="M518.4 1.500V8"/><path d="M524.4 1.500V8"/><path d="M530.4 1.500V8"/><path d="M536.5 1.500V8"/><path d="M542.5 1.500V16"/><path d="M548.5 1.500V8"/><path d="M554.5 1.500V8"/><path d="M560.6 1.500V8"/><path d="M566.6 1.500V8"/><path d="M572.6 1.500V16"/><path d="M578.7 1.500V8"/><path d="M584.7 1.500V8"/><path d="M590.7 1.500V8"/><path d="M596.7 1.500V8"/><path d="M602.8 1.500V16"/><path d="M608.8 1.500V8"/><path d="M614.8 1.500V8"/><path d="M620.8 1.500V8"/><path d="M626.9 1.500V8"/><path d="M632.9 1.500V16"/><path d="M638.9 1.500V8"/><path d="M645.0 1.500V8"/><path d="M651.0 1.500V8"/><path d="M657.0 1.500V8"/><path d="M663.0 1.500V16"/><path d="M669.1 1.500V8"/><path d="M675.1 1.500V8"/><path d="M681.1 1.500V8"/><path d="M687.1 1.500V8"/><path d="M693.2 1.500V16"/><path d="M699.2 1.500V8"/><path d="M705.2 1.500V8"/><path d="M711.3 1.500V8"/><path d="M717.3 1.500V8"/><path d="M723.3 1.500V16"/><path d="M729.3 1.500V8"/><path d="M735.4 1.500V8"/><path d="M741.4 1.500V8"/><path d="M747.4 1.500V8"/><path d="M753.4 1.500V16"/><path d="M759.5 1.500V8"/><path d="M765.5 1.500V8"/><path d="M771.5 1.500V8"/><path d="M777.5 1.500V8"/><path d="M783.6 1.500V16"/><path d="M789.6 1.500V8"/><path d="M795.6 1.500V8"/><path d="M801.7 1.500V8"/><path d="M807.7 1.500V8"/><path d="M813.7 1.500V16"/><path d="M819.7 1.500V8"/><path d="M825.8 1.500V8"/><path d="M831.8 1.500V8"/><path d="M837.8 1.500V8"/><path d="M843.8 1.500V16"/><path d="M849.9 1.500V8"/><path d="M855.9 1.500V8"/><path d="M861.9 1.500V8"/><path d="M868.0 1.500V8"/><path d="M874.0 1.500V16"/><path d="M880.0 1.500V8"/><path d="M886.0 1.500V8"/><path d="M892.1 1.500V8"/><path d="M898.1 1.500V8"/><path d="M904.1 1.500V16"/><path d="M910.1 1.500V8"/><path d="M916.2 1.500V8"/><path d="M922.2 1.500V8"/><path d="M928.2 1.500V8"/><path d="M934.3 1.500V16"/></g><g font-family="Liberation Sans, sans-serif" font-size="7.500" fill="#333" text-anchor="middle" stroke="#d4d4d4" stroke-width="1.6" paint-order="stroke"><text x="60.3" y="16">5</text><text x="90.5" y="16">10</text><text x="120.6" y="16">15</text><text x="150.7" y="16">20</text><text x="180.9" y="16">25</text><text x="211.0" y="16">30</text><text x="241.1" y="16">35</text><text x="271.3" y="16">40</text><text x="301.4" y="16">45</text><text x="331.6" y="16">50</text><text x="361.7" y="16">55</text><text x="391.8" y="16">60</text><text x="422.0" y="16">65</text><text x="452.1" y="16">70</text><text x="482.2" y="16">75</text><text x="512.4" y="16">80</text><text x="542.5" y="16">85</text><text x="572.6" y="16">90</text><text x="602.8" y="16">95</text><text x="632.9" y="16">100</text><text x="663.0" y="16">105</text><text x="693.2" y="16">110</text><text x="723.3" y="16">115</text><text x="753.4" y="16">120</text><text x="783.6" y="16">125</text><text x="813.7" y="16">130</text><text x="843.8" y="16">135</text><text x="874.0" y="16">140</text><text x="904.1" y="16">145</text><text x="934.3" y="16">150</text></g><rect x="27.500" y="1" width="4.500" height="15.500" fill="#8fb0dc" stroke="#5c7fb4" stroke-width="0.7"/><text x="30" y="16" font-family="Liberation Sans, sans-serif" font-size="7" fill="#345" text-anchor="middle">0</text><path d="M5.500 6v5M7.500 9c1-4 2.500-4 3 0s2 3 2.500 0" stroke="#1b8fa0" fill="none" stroke-width="1"/></svg>
<div class="a" style="left:0;top:631px;width:1202px;height:7px;background:#d6d6d6"></div>
<div class="a" style="left:0;top:632px;width:57px;height:6px;background:#eac4c4"></div>
<div class="a" style="left:58px;top:632px;width:3px;height:6px;background:#f4f4f4"></div>
<div class="a" style="left:323px;top:631px;width:558px;height:7px;background:#b6b6b6;border-radius:5px 0 0 0"></div>
<div class="t" style="left:66px;top:634px;font-size:7.4px;letter-spacing:-0.3px;color:#222">1 Object Selected</div>
<div class="a" style="left:714px;top:632.500px;width:36px;height:6px;background:#c3c3c3"></div>
<div class="a" style="left:766px;top:632.500px;width:34px;height:6px;background:#c3c3c3"></div>
<div class="a" style="left:818px;top:632.500px;width:34px;height:6px;background:#c3c3c3"></div>
<div class="a" style="left:657px;top:633px;width:6px;height:4px;border:1px solid #1b8fa0;background:#ddd"></div>
<div class="a" style="left:677px;top:634px;width:4px;height:3px;border:1px solid #555;border-bottom:0;border-radius:2px 2px 0 0"></div>
<div class="a" style="left:691px;top:633px;width:7px;height:4px;border:1px solid #333"></div>
<div class="t" style="left:704px;top:633px;font-size:7px;color:#333">X:</div><div class="t" style="left:758px;top:633px;font-size:7px;color:#333">Y:</div><div class="t" style="left:809px;top:633px;font-size:7px;color:#333">Z:</div>
<div class="t" style="left:862px;top:633.500px;font-size:7px;color:#222">Grid = 10.0</div>
<div class="a" style="left:930px;top:632.500px;width:26px;height:6px;background:#adadad"></div>
<div class="a" style="left:960px;top:632.500px;width:27px;height:6px;background:#adadad"></div>
<div class="a" style="left:991.5px;top:632.500px;width:69.5px;height:6px;background:#adadad"></div>
<div class="t" style="left:962px;top:633.500px;font-size:7px;color:#222">Auto Key</div><div class="t" style="left:994px;top:633.500px;font-size:7px;color:#222">Selected</div>
<div class="a" style="left:1054px;top:635px;border:2px solid transparent;border-top:2.500px solid #222"></div>
<svg class="a" style="left:1064px;top:631.500px" width="138" height="6.500" viewBox="0 -0.500 138 6.500" fill="#222">
<path d="M4 6V3.500h1V6zM6 6l3-3v3zM10 6l3-3v3z"/><path d="M21 6V3.500h1V6zM23 6l-0-2.500 0 2.500M24 6V3.500h1V6z"/><path d="M32 6V2l5 4z"/><path d="M44 6V3.500h1V6zM46.500 6V3.500h1V6z"/><path d="M54 6V1h.8V6z"/><path d="M58 6V3.500h1V6zM61 6l-0-3 3 3z"/>
<path d="M73 6c0-3 5-3 5 0h-1c0-1.800-3-1.800-3 0z" fill="#333"/>
<rect x="88" y="3.500" width="3" height="2.500" fill="#1b8fa0"/><rect x="92" y="2.500" width="2" height="2" fill="#1b8fa0"/>
<path d="M104 6c0-3 6-3 6 0z" fill="#1b8fa0"/><rect x="124" y="3" width="2" height="3" fill="#1b8fa0"/><rect x="134" y="3.500" width="3" height="2.500" fill="#1b8fa0"/>
</svg>
<div class="a" style="left:967px;top:78px;width:235px;height:554px;background:#cbcbcb"></div>
<div class="a" style="left:968.500px;top:80px;width:1px;height:552px;background:#dedede"></div>
<div class="a" style="left:969.5px;top:80px;width:18.500px;height:16px;background:#b7b7b7"></div>
<div class="a" style="left:989.5px;top:80px;width:18.500px;height:16px;background:#d8d8d8"></div>
<div class="a" style="left:1009.5px;top:80px;width:18.500px;height:16px;background:#b7b7b7"></div>
<div class="a" style="left:1029.5px;top:80px;width:18.500px;height:16px;background:#b7b7b7"></div>
<div class="a" style="left:1049.5px;top:80px;width:18.500px;height:16px;background:#b7b7b7"></div>
<div class="a" style="left:1069.5px;top:80px;width:18.500px;height:16px;background:#b7b7b7"></div>
<svg class="a" style="left:969px;top:80px" width="122" height="16" viewBox="0 0 122 16" fill="none">
<path d="M10 3.500v9M5.500 8h9" stroke="#555" stroke-width="1"/>
<path d="M26 4h7v8h-7z" stroke="#1b9aaa" stroke-width="1" stroke-dasharray="2 1.500"/><path d="M27.500 11.500c0-4 2-6 5-6" stroke="#444" stroke-width="1.300"/>
<rect x="46" y="3.500" width="8" height="3.500" fill="#777"/><rect x="45" y="9" width="3.500" height="3.500" fill="#5aa"/><rect x="51.500" y="9" width="3.500" height="3.500" fill="#5aa"/><path d="M50 7v2M46.500 9v-1h7v1" stroke="#666" stroke-width="0.800"/>
<circle cx="70" cy="8" r="4" fill="#6d6d6d"/><path d="M63.500 8a6.500 6.500 0 0113 0" stroke="#999" stroke-width="1" stroke-dasharray="1.500 1.500"/>
<rect x="85" y="4" width="10" height="6.500" fill="#6a6a6a"/><path d="M87.500 12.500h5" stroke="#777" stroke-width="1"/>
<path d="M106.500 4l7 8" stroke="#666" stroke-width="1.600"/><path d="M105 3.500l2.500 .5 .5 2.500" stroke="#777" stroke-width="1.200"/>
</svg>
<div class="a" style="left:1199.500px;top:98px;width:2.500px;height:534px;background:#f4f4f4"></div>
<svg class="a" style="left:1196px;top:112px" width="6" height="10" viewBox="0 0 6 10"><path d="M6 2.500l-3 2.500 3 2.500" fill="#fff" stroke="#222" stroke-width="0.800"/></svg>
<div class="a" style="left:973px;top:101px;width:99px;height:11px;background:#b3b3b3"></div>
<div class="t p" style="left:975px;top:101.5px;font-size:7.200px;letter-spacing:0.700px;color:#5a5a5a">C001</div>
<div class="a" style="left:1076px;top:101px;width:10px;height:11px;background:#000"></div>
<div class="a" style="left:973px;top:120px;width:113px;height:11px;background:#b3b3b3"></div>
<div class="t p" style="left:974.5px;top:120.5px;">Modifier List</div>
<div class="a" style="left:1078.500px;top:123.500px;border:2px solid transparent;border-top:2.500px solid #333"></div>
<div class="btn" style="left:974px;width:53px;top:139.2px;height:10.0px;line-height:10.0px">FFD 2x2x2</div>
<div class="btn" style="left:1032px;width:53px;top:139.2px;height:10.0px;line-height:10.0px">FFD 3x3x3</div>
<div class="btn" style="left:974px;width:53px;top:153.6px;height:10.0px;line-height:10.0px">FFD 4x4x4</div>
<div class="btn" style="left:1032px;width:53px;top:153.6px;height:10.0px;line-height:10.0px">Morpher</div>
<div class="btn" style="left:974px;width:53px;top:167.7px;height:10.0px;line-height:10.0px">Skin Wrap</div>
<div class="btn" style="left:1032px;width:53px;top:167.7px;height:10.0px;line-height:10.0px">UVW Map</div>
<div class="btn" style="left:974px;width:53px;top:182.2px;height:10.0px;line-height:10.0px">Unwrap UVW</div>
<div class="btn" style="left:1032px;width:53px;top:182.2px;height:10.0px;line-height:10.0px">MeshSmooth</div>
<div class="a" style="left:972.500px;top:199px;width:115px;height:73px;background:#cfcfcf;border:1px solid #f2f2f2"></div>
<div class="a" style="left:974px;top:200px;width:112px;height:10px;background:#86a9da"></div>
<div class="a" style="left:978px;top:202.500px;border:2.500px solid transparent;border-left:3.500px solid #222"></div>
<div class="t p" style="left:987px;top:200.8px;font-weight:bold;font-size:7.8px;letter-spacing:-0.25px;color:#1a1a2a">Editable Poly</div>
<svg class="a" style="left:972px;top:276px" width="116" height="16" viewBox="0 0 116 16" fill="none">
<path d="M6 11l3-3M8 5l3 3M9.500 4.500l2 2-2.500 1-1.500-1.500z" stroke="#444" stroke-width="1" fill="#555"/>
<path d="M19.500 3v10" stroke="#555" stroke-width="0.800"/>
<rect x="29.500" y="3.500" width="2.500" height="8" fill="#1b8fa0" stroke="#444" stroke-width="0.700"/>
<path d="M42.500 3v10" stroke="#c2c2c2" stroke-width="0.800"/>
<rect x="50" y="4" width="3" height="3" fill="#444"/><circle cx="55.500" cy="7" r="1.800" fill="#1b9aaa"/><circle cx="53" cy="10.500" r="1.800" fill="#1b9aaa"/><circle cx="57" cy="11" r="1.500" fill="#1b9aaa"/>
<path d="M66 5h6M67 5l.5 7h3l.5-7M68 4h2" stroke="#555" stroke-width="1"/><rect x="67" y="5.500" width="4" height="6.500" fill="#777"/>
<path d="M79.500 3v10" stroke="#555" stroke-width="0.800"/>
<rect x="86.500" y="4.500" width="7.500" height="7.500" fill="#ddd" stroke="#444" stroke-width="0.800"/><path d="M86.500 7h7.500M89 4.500v7.500M91.500 4.500v7.500" stroke="#444" stroke-width="0.600"/><path d="M90 8l4.500-4.500" stroke="#e0a020" stroke-width="1.800"/>
</svg>
<div class="a" style="left:975px;top:302px;width:109px;height:1px;background:#bdbdbd"></div>
<svg class="a" style="left:1024px;top:299.500px" width="10" height="6" viewBox="0 0 10 6"><path d="M1.500 1.500c1 1.500 2 1.500 3.500 0c1.500 1.500 2.500 1.500 3.500 0" stroke="#444" fill="none" stroke-width="0.900"/></svg>
<div class="a" style="left:972px;top:306px;width:113px;height:150px;background:#c5c5c5"></div>
<div class="a" style="left:975px;top:307px;width:109px;height:11px;background:#c9c9c9"></div>
<div class="a" style="left:976px;top:311px;border:2px solid transparent;border-top:2.500px solid #777"></div>
<div class="t p" style="left:984px;top:307.5px;font-weight:bold;font-size:7.8px;letter-spacing:-0.25px;color:#222">Selection</div>
<div class="a" style="left:1075px;top:311px;border:1.500px solid transparent;border-top:2px solid #bbb"></div>
<svg class="a" style="left:986px;top:320px" width="80" height="16" viewBox="0 0 80 16" fill="none" stroke="#1b9aaa" stroke-width="1">
<circle cx="4.500" cy="7" r="1.200" fill="#1b9aaa"/><circle cx="9" cy="4" r="1" fill="#1b9aaa"/><circle cx="9.500" cy="10.500" r="1" fill="#1b9aaa"/><circle cx="12" cy="7" r=".8" fill="#1b9aaa"/>
<path d="M20 8.500l7-4.500-1.500 8z" stroke-width="0.900"/>
<path d="M37 4c3-1 4 0 4 3.500s-1 5-4 3.500" stroke-width="0.900"/><path d="M37 4v1.500M37 9.500v1.500" />
<rect x="50.500" y="3.500" width="8" height="8" fill="#1b9aaa"/>
<path d="M70 3l4.500 2v5l-4.500 2.500-4.500-2.500v-5z" fill="#1b9aaa"/><path d="M65.500 5l4.500 2 4.500-2M70 7v5.500" stroke="#cfeef2" stroke-width="0.700"/>
</svg>
<div class="cb" style="left:984px;top:340.5px;background:#c9c9c9"></div>
<div class="t p dis" style="left:990px;top:338.5px;">By Vertex</div>
<div class="cb" style="left:984px;top:352.5px;background:#c9c9c9"></div>
<div class="t p dis" style="left:990px;top:350.5px;">Ignore Backfacing</div>
<div class="cb" style="left:984px;top:365px;background:#c9c9c9"></div>
<div class="t p dis" style="left:990px;top:363px;">By Angle:</div>
<div class="t p dis" style="left:1026px;top:363px;">45.0</div>
<div class="t p dis" style="left:1068px;top:363px;font-size:7px">↕</div>
<div class="btn d" style="left:983.5px;width:41.5px;top:376.5px;height:9.0px;line-height:9.0px">Shrink</div>
<div class="btn d" style="left:1031.5px;width:42.5px;top:376.5px;height:9.0px;line-height:9.0px">Grow</div>
<div class="btn d" style="left:983.5px;width:32.5px;top:390.5px;height:9.0px;line-height:9.0px">Ring</div>
<div class="t p dis" style="left:1020px;top:390px;font-size:7px">↕</div>
<div class="btn d" style="left:1031.5px;width:32.5px;top:390.5px;height:9.0px;line-height:9.0px">Loop</div>
<div class="t p dis" style="left:1069px;top:390px;font-size:7px">↕</div>
<div class="t p" style="left:979px;top:402px;">Preview Selection</div>
<div class="a" style="left:976px;top:411.500px;width:100px;height:15px;border:1px solid #cdcdcd"></div>
<div class="rd on" style="left:978.5px;top:415.5px"></div>
<div class="t p" style="left:989px;top:413.5px;">Off</div>
<div class="rd" style="left:1010px;top:415.500px;background:#cbcbcb"></div>
<div class="t p dis" style="left:1020px;top:413.5px;">SubObj</div>
<div class="rd" style="left:1051px;top:415.500px;background:#cbcbcb"></div>
<div class="t p dis" style="left:1058px;top:413.5px;">Multi</div>
<div class="t c p" style="left:990px;width:94px;top:431.3px;">Whole Object Selected</div>
<div class="a" style="left:972px;top:459px;width:113px;height:11px;background:#c5c5c5"></div>
<div class="a" style="left:976.500px;top:461.500px;border:2px solid transparent;border-left:2.500px solid #777"></div>
<div class="t p" style="left:984px;top:459.5px;font-weight:bold;font-size:7.8px;letter-spacing:-0.25px;color:#222">Soft Selection</div>
<div class="a" style="left:1075px;top:463px;border:1.500px solid transparent;border-top:2px solid #bbb"></div>
<div class="a" style="left:1087.500px;top:98px;width:2px;height:534px;background:#d4d4d4"></div>
<div class="a" style="left:1090px;top:98px;width:106px;height:293px;background:#c5c5c5"></div>
<div class="a" style="left:1092.500px;top:102.500px;border:2px solid transparent;border-top:2.500px solid #777"></div>
<div class="t p" style="left:1100px;top:99px;font-weight:bold;font-size:7.8px;letter-spacing:-0.25px;color:#222">Edit Geometry</div>
<div class="a" style="left:1190px;top:102.500px;border:1.500px solid transparent;border-top:2px solid #bbb"></div>
<div class="btn" style="left:1096.5px;width:92.0px;top:114.8px;height:9.200000000000003px;line-height:9.200000000000003px">Repeat Last</div>
<div class="t p" style="left:1098.5px;top:124.5px;">Constraints</div>
<div class="a" style="left:1096px;top:134px;width:93px;height:24px;border:1px solid #cdcdcd;border-top:0"></div>
<div class="rd on" style="left:1102px;top:137px"></div>
<div class="t p" style="left:1112px;top:135px;">None</div>
<div class="rd" style="left:1139px;top:137px"></div>
<div class="t p" style="left:1149.5px;top:135px;">Edge</div>
<div class="rd" style="left:1102px;top:148.5px"></div>
<div class="t p" style="left:1112px;top:146.5px;">Face</div>
<div class="rd" style="left:1139px;top:148.5px"></div>
<div class="t p" style="left:1149.5px;top:146.5px;">Normal</div>
<div class="cb" style="left:1103px;top:166.5px;"></div>
<div class="t p" style="left:1110.5px;top:164.5px;">Preserve UVs</div>
<div class="a" style="left:1160.5px;top:166px;width:7px;height:7px;border:1px solid #222;border-top:2.5px solid #222;background:#e8e8e8"></div>
<div class="btn" style="left:1097px;width:42.5px;top:178.5px;height:9.5px;line-height:9.5px">Create</div>
<div class="btn d" style="left:1146px;width:42px;top:178.5px;height:9.5px;line-height:9.5px">Collapse</div>
<div class="btn" style="left:1097px;width:33.5px;top:193px;height:9.5px;line-height:9.5px">Attach</div>
<div class="a" style="left:1132.5px;top:194px;width:7px;height:7px;border:1px solid #222;border-top:2.5px solid #222;background:#e8e8e8"></div>
<div class="btn d" style="left:1146px;width:42px;top:193px;height:9.5px;line-height:9.5px">Detach</div>
<div class="a" style="left:1095.500px;top:206px;width:94px;height:44.500px;border:1px solid #cdcdcd"></div>
<div class="btn d" style="left:1099.5px;width:39.5px;top:210.5px;height:9.5px;line-height:9.5px">Slice Plane</div>
<div class="cb" style="left:1146.5px;top:212.5px;"></div>
<div class="t p" style="left:1153px;top:210.5px;">Split</div>
<div class="btn d" style="left:1099.5px;width:39.5px;top:224.5px;height:9.5px;line-height:9.5px">Slice</div>
<div class="btn d" style="left:1145.5px;width:41.5px;top:224.5px;height:9.5px;line-height:9.5px">Reset Plane</div>
<div class="btn" style="left:1098px;width:41.700000000000045px;top:239.5px;height:9.300000000000011px;line-height:9.300000000000011px">QuickSlice</div>
<div class="btn" style="left:1145px;width:42px;top:239.5px;height:9.300000000000011px;line-height:9.300000000000011px">Cut</div>
<div class="btn" style="left:1097px;width:33.700000000000045px;top:257px;height:9px;line-height:9px">MSmooth</div>
<div class="a" style="left:1132.5px;top:257.5px;width:7px;height:7px;border:1px solid #222;border-top:2.5px solid #222;background:#e8e8e8"></div>
<div class="btn" style="left:1145px;width:33.40000000000009px;top:257px;height:9px;line-height:9px">Tessellate</div>
<div class="a" style="left:1181px;top:257.5px;width:7px;height:7px;border:1px solid #222;border-top:2.5px solid #222;background:#e8e8e8"></div>
<div class="btn" style="left:1097px;width:51.40000000000009px;top:271.7px;height:9.0px;line-height:9.0px">Make Planar</div>
<div class="btn" style="left:1153px;width:8.700000000000045px;top:271.7px;height:9.0px;line-height:9.0px">X</div>
<div class="btn" style="left:1166px;width:9px;top:271.7px;height:9.0px;line-height:9.0px">Y</div>
<div class="btn" style="left:1179px;width:9px;top:271.7px;height:9.0px;line-height:9.0px">Z</div>
<div class="btn" style="left:1097px;width:42.5px;top:285.7px;height:9.300000000000011px;line-height:9.300000000000011px">View Align</div>
<div class="btn" style="left:1145px;width:43px;top:285.7px;height:9.300000000000011px;line-height:9.300000000000011px">Grid Align</div>
<div class="btn" style="left:1120px;width:34.5px;top:300px;height:8.800000000000011px;line-height:8.800000000000011px">Relax</div>
<div class="a" style="left:1156.5px;top:300.5px;width:7px;height:7px;border:1px solid #222;border-top:2.5px solid #222;background:#e8e8e8"></div>
<div class="btn d" style="left:1096.5px;width:43.5px;top:314.5px;height:9.0px;line-height:9.0px">Hide Selected</div>
<div class="btn d" style="left:1146px;width:50px;top:314.5px;height:9.0px;line-height:9.0px">Unhide All</div>
<div class="btn d" style="left:1115px;width:55px;top:328.5px;height:9.0px;line-height:9.0px">Hide Unselected</div>
<div class="t p dis" style="left:1097px;top:340px;">Named Selections:</div>
<div class="btn d" style="left:1097px;width:42.5px;top:352.5px;height:9.0px;line-height:9.0px">Copy</div>
<div class="btn d" style="left:1146px;width:42px;top:352.5px;height:9.0px;line-height:9.0px">Paste</div>
<div class="cb" style="left:1099px;top:366.5px;background:#c9c9c9"></div>
<svg class="a" style="left:1098px;top:365.5px" width="8" height="8" viewBox="0 0 8 8"><path d="M1.800 4.200l1.700 1.600 2.800-3.600" fill="none" stroke="#999" stroke-width="1.100"/></svg>
<div class="t p dis" style="left:1106px;top:364.5px;">Delete Isolated Vertices</div>
<div class="cb" style="left:1114px;top:379.5px;"></div>
<svg class="a" style="left:1113px;top:378.5px" width="8" height="8" viewBox="0 0 8 8"><path d="M1.800 4.200l1.700 1.600 2.800-3.600" fill="none" stroke="#111" stroke-width="1.100"/></svg>
<div class="t p" style="left:1121px;top:377.5px;">Full Interactivity</div>
<div class="a" style="left:1182.500px;top:315px;width:20px;height:50px;background:#2b2b2b;border-radius:3px 0 0 3px"></div>
<svg class="a" style="left:1188px;top:332px" width="12" height="16" viewBox="0 0 12 16"><path d="M8.500 2.500l-5 5.500 5 5.500" fill="none" stroke="#fff" stroke-width="1.100"/></svg>
<div class="a" style="left:1090px;top:393.500px;width:106px;height:233px;background:#c5c5c5"></div>
<div class="a" style="left:1092.500px;top:398px;border:2px solid transparent;border-top:2.500px solid #777"></div>
<div class="t p" style="left:1100px;top:394.6px;font-weight:bold;font-size:7.8px;letter-spacing:-0.25px;color:#222">Subdivision Surface</div>
<div class="a" style="left:1190px;top:398px;border:1.500px solid transparent;border-top:2px solid #bbb"></div>
<div class="cb" style="left:1100px;top:412.5px;"></div>
<svg class="a" style="left:1099px;top:411.5px" width="8" height="8" viewBox="0 0 8 8"><path d="M1.800 4.200l1.700 1.600 2.800-3.600" fill="none" stroke="#111" stroke-width="1.100"/></svg>
<div class="t p" style="left:1107px;top:410.5px;">Smooth Result</div>
<div class="cb" style="left:1100px;top:425.5px;"></div>
<div class="t p" style="left:1107px;top:423.5px;">Use NURMS Subdivision</div>
<div class="cb" style="left:1100px;top:437.6px;"></div>
<svg class="a" style="left:1099px;top:436.6px" width="8" height="8" viewBox="0 0 8 8"><path d="M1.800 4.200l1.700 1.600 2.800-3.600" fill="none" stroke="#111" stroke-width="1.100"/></svg>
<div class="t p" style="left:1107px;top:435.6px;">Isoline Display</div>
<div class="cb" style="left:1100px;top:450.5px;"></div>
<svg class="a" style="left:1099px;top:449.5px" width="8" height="8" viewBox="0 0 8 8"><path d="M1.800 4.200l1.700 1.600 2.800-3.600" fill="none" stroke="#111" stroke-width="1.100"/></svg>
<div class="t p" style="left:1107px;top:448.5px;">Show Cage......</div>
<div class="a" style="left:1162px;top:449px;width:9px;height:9px;background:#f7941d;border:1px solid #7a4a10"></div>
<div class="a" style="left:1176px;top:449px;width:9px;height:9px;background:#fcd116;border:1px solid #7a6a10"></div>
<div class="t p" style="left:1098.5px;top:459px;">Display</div>
<div class="a" style="left:1096px;top:468px;width:93px;height:25.500px;border:1px solid #cdcdcd;border-top:0"></div>
<div class="t p" style="left:1090px;width:58.500px;text-align:right;top:467.5px">Iterations:</div>
<div class="a" style="left:1151.500px;top:468.0px;width:34.500px;height:9px;background:#b3b3b3"></div>
<div class="t p" style="left:1153.5px;top:467.5px;">1</div>
<div class="a" style="left:1181px;top:468.5px;border:1.500px solid transparent;border-bottom:2.500px solid #222;border-top:0"></div>
<div class="a" style="left:1181px;top:473.5px;border:1.500px solid transparent;border-top:2.500px solid #222;border-bottom:0"></div>
<div class="t p" style="left:1090px;width:58.500px;text-align:right;top:480.5px">Smoothness:</div>
<div class="a" style="left:1151.500px;top:481.0px;width:34.500px;height:9px;background:#b3b3b3"></div>
<div class="t p" style="left:1153.5px;top:480.5px;">1.0</div>
<div class="a" style="left:1181px;top:481.5px;border:1.500px solid transparent;border-bottom:2.500px solid #222;border-top:0"></div>
<div class="a" style="left:1181px;top:486.5px;border:1.500px solid transparent;border-top:2.500px solid #222;border-bottom:0"></div>
<div class="t p" style="left:1098.5px;top:493.6px;">Render</div>
<div class="a" style="left:1096px;top:502.500px;width:93px;height:25.500px;border:1px solid #cdcdcd;border-top:0"></div>
<div class="t p" style="left:1090px;width:58.500px;text-align:right;top:502.3px">Iterations:</div>
<div class="a" style="left:1151.500px;top:502.8px;width:34.500px;height:9px;background:#c0c0c0"></div>
<div class="t p dis" style="left:1153.5px;top:502.3px;">0</div>
<div class="a" style="left:1181px;top:503.3px;border:1.500px solid transparent;border-bottom:2.500px solid #aaa;border-top:0"></div>
<div class="a" style="left:1181px;top:508.3px;border:1.500px solid transparent;border-top:2.500px solid #aaa;border-bottom:0"></div>
<div class="cb" style="left:1100px;top:504.3px;background:#c9c9c9"></div>
<div class="t p" style="left:1090px;width:58.500px;text-align:right;top:515px">Smoothness:</div>
<div class="a" style="left:1151.500px;top:515.5px;width:34.500px;height:9px;background:#c0c0c0"></div>
<div class="t p dis" style="left:1153.5px;top:515px;">1.0</div>
<div class="a" style="left:1181px;top:516px;border:1.500px solid transparent;border-bottom:2.500px solid #aaa;border-top:0"></div>
<div class="a" style="left:1181px;top:521px;border:1.500px solid transparent;border-top:2.500px solid #aaa;border-bottom:0"></div>
<div class="cb" style="left:1100px;top:517px;background:#c9c9c9"></div>
<div class="t p" style="left:1098.5px;top:529.5px;">Separate By</div>
<div class="a" style="left:1096px;top:538.500px;width:93px;height:24px;border:1px solid #cdcdcd;border-top:0"></div>
<div class="cb" style="left:1100px;top:542.5px;"></div>
<div class="t p" style="left:1107px;top:540.5px;">Smoothing Groups</div>
<div class="cb" style="left:1100px;top:553.5px;"></div>
<div class="t p" style="left:1107px;top:551.5px;">Materials</div>
<div class="t p" style="left:1098.5px;top:564.3px;">Update Options</div>
<div class="a" style="left:1096px;top:573px;width:93px;height:50px;border:1px solid #cdcdcd;border-top:0"></div>
<div class="rd on" style="left:1099.5px;top:575px"></div>
<div class="t p" style="left:1110.5px;top:573px;">Always</div>
<div class="rd" style="left:1099.5px;top:585px"></div>
<div class="t p" style="left:1110.5px;top:583px;">When Rendering</div>
<div class="rd" style="left:1099.5px;top:595px"></div>
<div class="t p" style="left:1110.5px;top:593px;">Manually</div>
<div class="btn" style="left:1113px;width:59px;top:608.3px;height:10.200000000000045px;line-height:10.200000000000045px">Update</div>
</body></html>
